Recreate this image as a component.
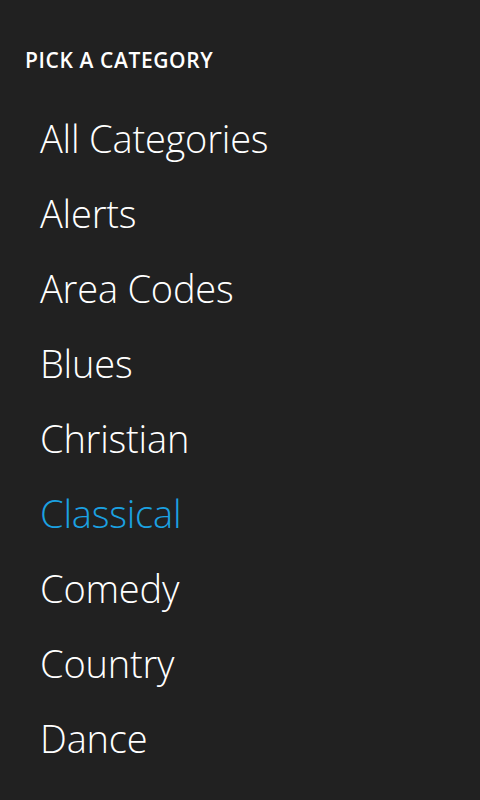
const categories = [
  'All Categories',
  'Alerts',
  'Area Codes',
  'Blues',
  'Christian',
  'Classical',
  'Comedy',
  'Country',
  'Dance',
];

const App = () => {
  const selected = 'Classical';

  return (
    <main
      className="h-[800px] w-[480px] overflow-hidden bg-[#212121] text-white"
      style={{ fontFamily: '"Open Sans", "Noto Sans", sans-serif' }}
    >
      <h1 className="pl-[25px] pt-[46px] text-[21px] font-semibold leading-[28px] tracking-[0.6px]">
        PICK A CATEGORY
      </h1>

      <ul className="mt-[27px] pl-[40px]">
        {categories.map((c) => (
          <li
            key={c}
            className={
              'h-[75px] text-[38px] font-light leading-[75px] tracking-[-0.2px] ' +
              (c === selected ? 'text-[#1ba1e2]' : 'text-white')
            }
          >
            {c}
          </li>
        ))}
      </ul>
    </main>
  );
};

export default App;
